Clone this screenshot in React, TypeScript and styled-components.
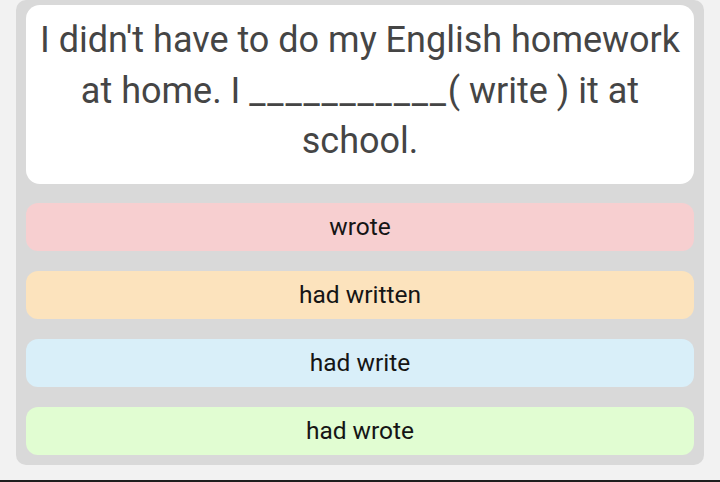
import styled, { createGlobalStyle } from 'styled-components';

const GlobalStyle = createGlobalStyle`
  html, body {
    margin: 0;
    padding: 0;
    background: #f2f2f2;
    font-family: Roboto, "Liberation Sans", sans-serif;
  }
`;

const Screen = styled.div`
  height: 482px;
  display: flex;
  flex-direction: column;
  overflow: hidden;
`;

const Panel = styled.div`
  margin: 0 16px;
  padding: 5px 10px 10px;
  background: #d9d9d9;
  border-radius: 10px;
`;

const QuestionCard = styled.div`
  background: #ffffff;
  border-radius: 14px;
  padding: 10px 12px 17px;
  text-align: center;
  font-size: 36px;
  line-height: 50.5px;
  color: #454545;
`;

const Blank = styled.span`
  letter-spacing: 1.8px;
`;

const Options = styled.div`
  margin-top: 19px;
  display: flex;
  flex-direction: column;
  gap: 20px;
`;

const Option = styled.div<{ $bg: string }>`
  height: 48px;
  border-radius: 12px;
  background: ${(p) => p.$bg};
  display: flex;
  align-items: center;
  justify-content: center;
  font-size: 24.5px;
  color: #151515;
`;

const Spacer = styled.div`
  flex: 1;
`;

const BottomRule = styled.div`
  height: 2px;
  background: #1e1e1e;
`;

const answers = [
  { label: 'wrote', bg: '#f7cfd0' },
  { label: 'had written', bg: '#fce3bd' },
  { label: 'had write', bg: '#d9eff9' },
  { label: 'had wrote', bg: '#e1fdd2' },
];

function App() {
  return (
    <Screen>
      <GlobalStyle />
      <Panel>
        <QuestionCard>
          I didn't have to do my English homework at home. I <Blank>___________</Blank>( write ) it at school.
        </QuestionCard>
        <Options>
          {answers.map((a) => (
            <Option key={a.label} $bg={a.bg}>
              {a.label}
            </Option>
          ))}
        </Options>
      </Panel>
      <Spacer />
      <BottomRule />
    </Screen>
  );
}

export default App;
